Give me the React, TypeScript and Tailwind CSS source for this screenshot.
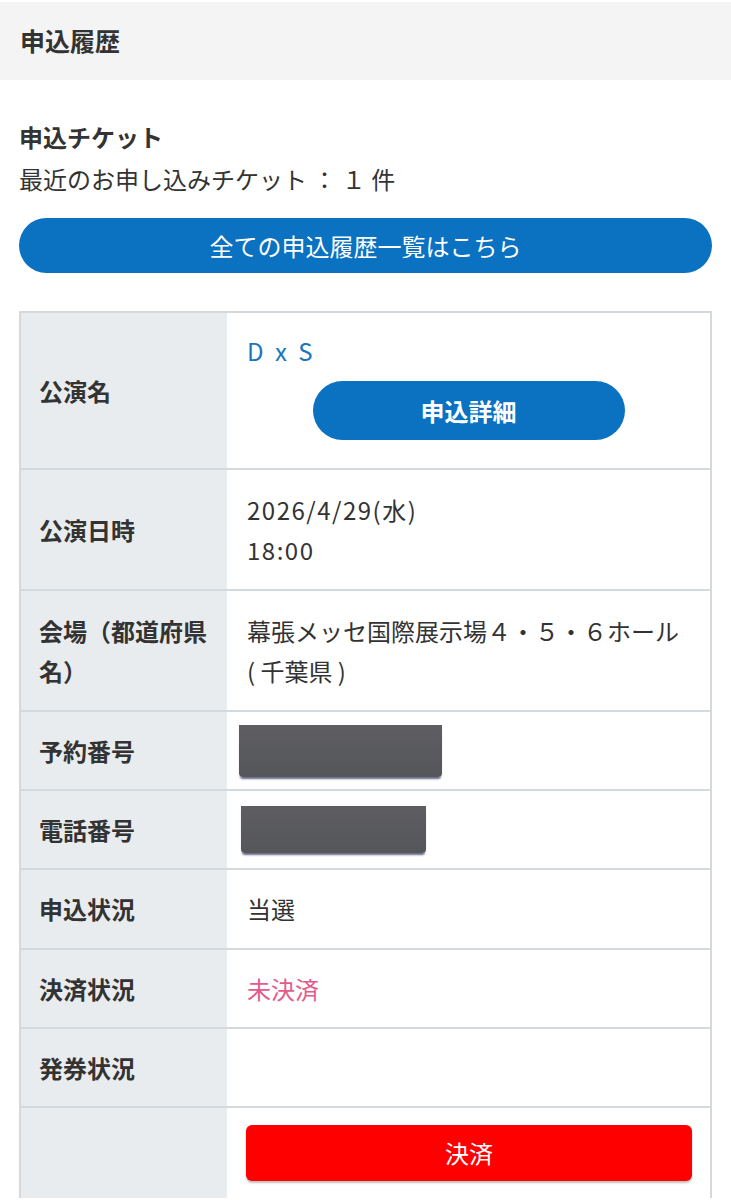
import type { ReactNode } from "react";

const font = { fontFamily: '"Noto Sans CJK JP", "Noto Sans", sans-serif' };

function Row({ label, children, className = "" }: { label?: ReactNode; children: ReactNode; className?: string }) {
  return (
    <div className="flex border-t-2 border-[#d3d9dc] first:border-t-0">
      <div className="flex w-[206px] shrink-0 items-center bg-[#e8ecee] pl-[18px] pr-2 text-[24px] font-bold leading-[40px] text-[#333]">
        {label}
      </div>
      <div className={`flex-1 bg-white pl-5 text-[24px] leading-[40px] text-[#333] ${className}`}>{children}</div>
    </div>
  );
}

function Redacted({ w, h }: { w: string; h: string }) {
  return (
    <div
      className={`${w} ${h} rounded-b-[4px] bg-gradient-to-b from-[#5e5e62] to-[#55565a] shadow-[0_3px_2px_-1px_rgba(40,40,90,0.7)]`}
    />
  );
}

export default function App() {
  return (
    <div className="min-h-[1200px] bg-white" style={font}>
      <div className="mt-[2px] flex h-[78px] items-center bg-[#f4f4f4] px-5">
        <h1 className="text-[25px] font-bold text-[#333]">申込履歴</h1>
      </div>

      <div className="px-[19px]">
        <h2 className="mt-[39px] text-[24px] font-bold leading-[36px] text-[#333]">申込チケット</h2>
        <p className="mt-[6px] text-[24px] leading-[36px] text-[#333]">最近のお申し込みチケット ： １ 件</p>

        <button className="mt-[21px] flex h-[55px] w-full items-center justify-center rounded-full bg-[#0a72c1] text-[24px] text-white">
          全ての申込履歴一覧はこちら
        </button>

        <div className="mt-[38px] border-2 border-b-0 border-[#d3d9dc]">
          <Row label="公演名" className="pt-[18px] pb-[28px]">
            <div className="tracking-[3px] text-[#1a74bf]">D x S</div>
            <div className="mt-[10px] flex justify-center pr-5">
              <button className="h-[59px] w-[312px] rounded-full bg-[#0a72c1] text-[24px] font-bold text-white">
                申込詳細
              </button>
            </div>
          </Row>
          <Row label="公演日時" className="pt-[20px] pb-[19px] tracking-[1.5px]">
            <div>2026/4/29(水)</div>
            <div>18:00</div>
          </Row>
          <Row label={<span>会場（都道府県名）</span>} className="pt-[20px] pb-[19px]">
            <div>幕張メッセ国際展示場４・５・６ホール</div>
            <div>( 千葉県 )</div>
          </Row>
          <Row label="予約番号" className="flex h-[77px] items-center !pl-[12px]">
            <Redacted w="w-[203px]" h="h-[52px]" />
          </Row>
          <Row label="電話番号" className="flex h-[77px] items-center !pl-[14px]">
            <Redacted w="w-[185px]" h="h-[47px]" />
          </Row>
          <Row label="申込状況" className="flex h-[78px] items-center">
            当選
          </Row>
          <Row label="決済状況" className="flex h-[77px] items-center">
            <span className="text-[#e45a8c]">未決済</span>
          </Row>
          <Row label="発券状況" className="h-[77px]">
            {""}
          </Row>
          <Row className="pt-[17px] pr-[18px] pb-[17px] !pl-[19px]">
            <button className="flex h-[56px] w-full items-center justify-center rounded-[6px] bg-[#ff0000] text-[24px] text-white shadow-[0_2px_2px_rgba(0,0,0,0.25)]">
              決済
            </button>
          </Row>
        </div>
      </div>
    </div>
  );
}
